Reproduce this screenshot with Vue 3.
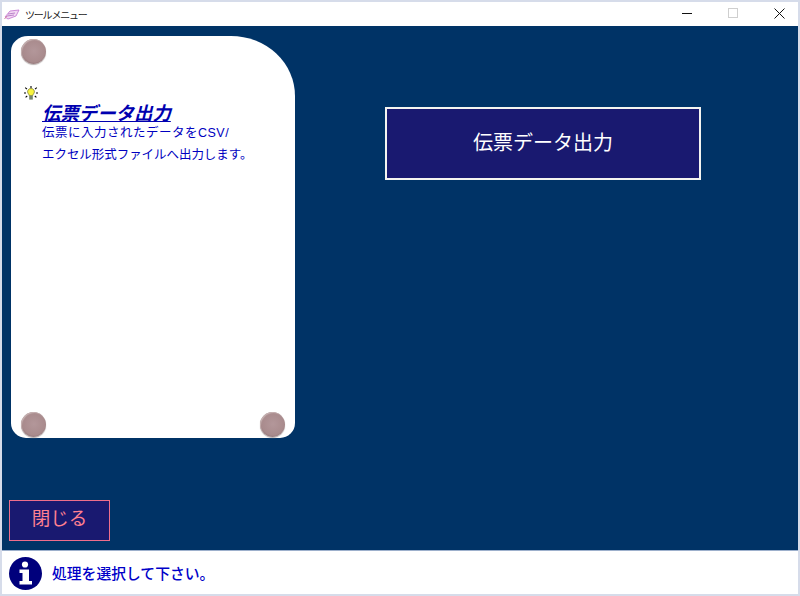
<script setup>
const screws = ['tl', 'bl', 'br']
</script>

<template>
  <div class="window">
    <header class="titlebar">
      <svg class="app-icon" viewBox="0 0 16 12" width="16" height="12">
        <path d="M1 8 L6 2 L15 1 L12 7 L4 10 Z" fill="#f3d8f3" stroke="#c070d0" stroke-width="0.8" />
        <path d="M4 5 L11 4 M3 7 L10 6" stroke="#a060b8" stroke-width="0.7" />
        <path d="M0.5 10 L3 7" stroke="#d080a0" stroke-width="1" />
      </svg>
      <span class="title">ツールメニュー</span>
      <div class="controls">
        <span class="ctl"><svg width="10" height="10" viewBox="0 0 10 10"><path d="M0 5.5H10" stroke="#111" stroke-width="1" /></svg></span>
        <span class="ctl"><svg width="10" height="10" viewBox="0 0 10 10"><rect x="0.5" y="0.5" width="9" height="9" fill="none" stroke="#cfcfcf" /></svg></span>
        <span class="ctl"><svg width="11" height="11" viewBox="0 0 11 11"><path d="M0.5 0.5L10.5 10.5M10.5 0.5L0.5 10.5" stroke="#111" stroke-width="1" /></svg></span>
      </div>
    </header>

    <main class="body">
      <div class="top">
        <aside class="card">
          <span v-for="s in screws" :key="s" class="screw" :class="s"></span>
          <svg class="bulb" viewBox="0 0 14 14" width="14" height="14">
            <path d="M7 0V2M1.2 1.6L3 3.2M12.8 1.6L11 3.2M0 7H2M12 7H14M1.6 11.4L3.2 10M12.4 11.4L10.8 10" stroke="#000" stroke-width="1.1" />
            <path d="M7 2.5C4.8 2.5 3.6 4.2 3.6 5.8C3.6 7.4 5 8.2 5.3 9.6H8.7C9 8.2 10.4 7.4 10.4 5.8C10.4 4.2 9.2 2.5 7 2.5Z" fill="#f8f440" stroke="#6a6a20" stroke-width="0.7" />
            <rect x="5.2" y="9.8" width="3.6" height="3.8" fill="#76866c" />
          </svg>
          <div class="info">
            <div class="info-head">伝票データ出力</div>
            <p class="info-text"><span class="wide">伝票に入力されたデータをCSV/</span><br />エクセル形式ファイルへ出力します。</p>
          </div>
        </aside>
        <div class="actions">
          <button class="main-btn">伝票データ出力</button>
        </div>
      </div>
      <div class="bottom">
        <button class="close-btn">閉じる</button>
      </div>
    </main>

    <footer class="status">
      <svg class="info-icon" viewBox="0 0 33 33" width="33" height="33">
        <circle cx="16.5" cy="16.5" r="16.5" fill="#00007c" />
        <circle cx="16" cy="7.5" r="3.1" fill="#fff" />
        <path d="M10.5 12.5H20V24H23V27.5H10.5V24H13.5V16H10.5Z" fill="#fff" />
      </svg>
      <span class="status-text">処理を選択して下さい。</span>
    </footer>
  </div>
</template>

<style>
html, body { margin: 0; background: #fff; }
</style>

<style scoped>
.window {
  width: 800px;
  height: 596px;
  box-sizing: border-box;
  border: 2px solid #d6dcea;
  display: flex;
  flex-direction: column;
  font-family: "Liberation Sans", "Noto Sans CJK JP", sans-serif;
  background: #fff;
  overflow: hidden;
}
.titlebar {
  height: 24px;
  flex: none;
  display: flex;
  align-items: center;
  background: #fff;
  padding-left: 2px;
}
.app-icon { margin-right: 5px; margin-top: 1px; }
.title { font-size: 10px; color: #222; letter-spacing: -1.2px; }
.controls { margin-left: auto; margin-right: -4px; display: flex; }
.ctl {
  width: 46px;
  height: 22px;
  padding-bottom: 2px;
  display: flex;
  align-items: center;
  justify-content: center;
}
.body {
  flex: 1;
  background: #003366;
  display: flex;
  flex-direction: column;
  justify-content: space-between;
  padding: 10px 0 0 9px;
  min-height: 0;
}
.top { display: flex; }
.card {
  position: relative;
  width: 284px;
  height: 402px;
  box-sizing: border-box;
  background: #fff;
  border-radius: 17px 64px 15px 15px / 15px 60px 15px 15px;
  padding: 50px 0 0 13px;
}
.screw {
  position: absolute;
  width: 25px;
  height: 25px;
  border-radius: 50%;
  background: radial-gradient(circle at 52% 48%, #b3979a 0, #a98b8d 60%, #8a6f71 78%, #4a3d3f 100%);
  box-shadow: inset 1px 1px 1px #c8b4b4, 0 1px 1px #b8b0b0;
}
.tl { left: 10px; top: 3px; }
.bl { left: 10px; bottom: 1px; }
.br { right: 10px; bottom: 1px; }
.bulb { display: block; }
.info { margin: 3px 0 0 18px; }
.info-head {
  font-size: 18.5px;
  line-height: 21px;
  font-weight: 700;
  font-style: italic;
  color: #0000b0;
  text-decoration: underline;
  letter-spacing: -0.1px;
}
.info-text {
  margin: -2px 0 0;
  font-size: 12.5px;
  line-height: 22px;
  color: #0000c0;
  letter-spacing: -0.05px;
  white-space: nowrap;
}
.wide { letter-spacing: 0.5px; }
.actions { margin: 71px 0 0 90px; }
.main-btn {
  display: block;
  width: 316px;
  height: 73px;
  box-sizing: border-box;
  background: #191970;
  border: 2px solid #f4f4f0;
  color: #fff;
  font: 400 20px "Noto Sans CJK JP", sans-serif;
  padding: 0 0 4px;
}
.close-btn {
  display: block;
  margin: 0 0 9px -2px;
  width: 101px;
  height: 41px;
  box-sizing: border-box;
  background: #191970;
  border: 1px solid #ee6e8c;
  color: #ff8090;
  font: 400 18.5px "Noto Sans CJK JP", sans-serif;
  padding: 0 0 7px;
}
.status {
  height: 44px;
  flex: none;
  display: flex;
  align-items: center;
  background: #fff;
  padding-left: 7px;
  border-top: 1px solid #9db0cc;
  box-sizing: border-box;
}
.info-icon { margin: 2px 10px 0 0; }
.status-text { font-size: 14.8px; color: #0000c8; font-weight: 500; }
</style>
